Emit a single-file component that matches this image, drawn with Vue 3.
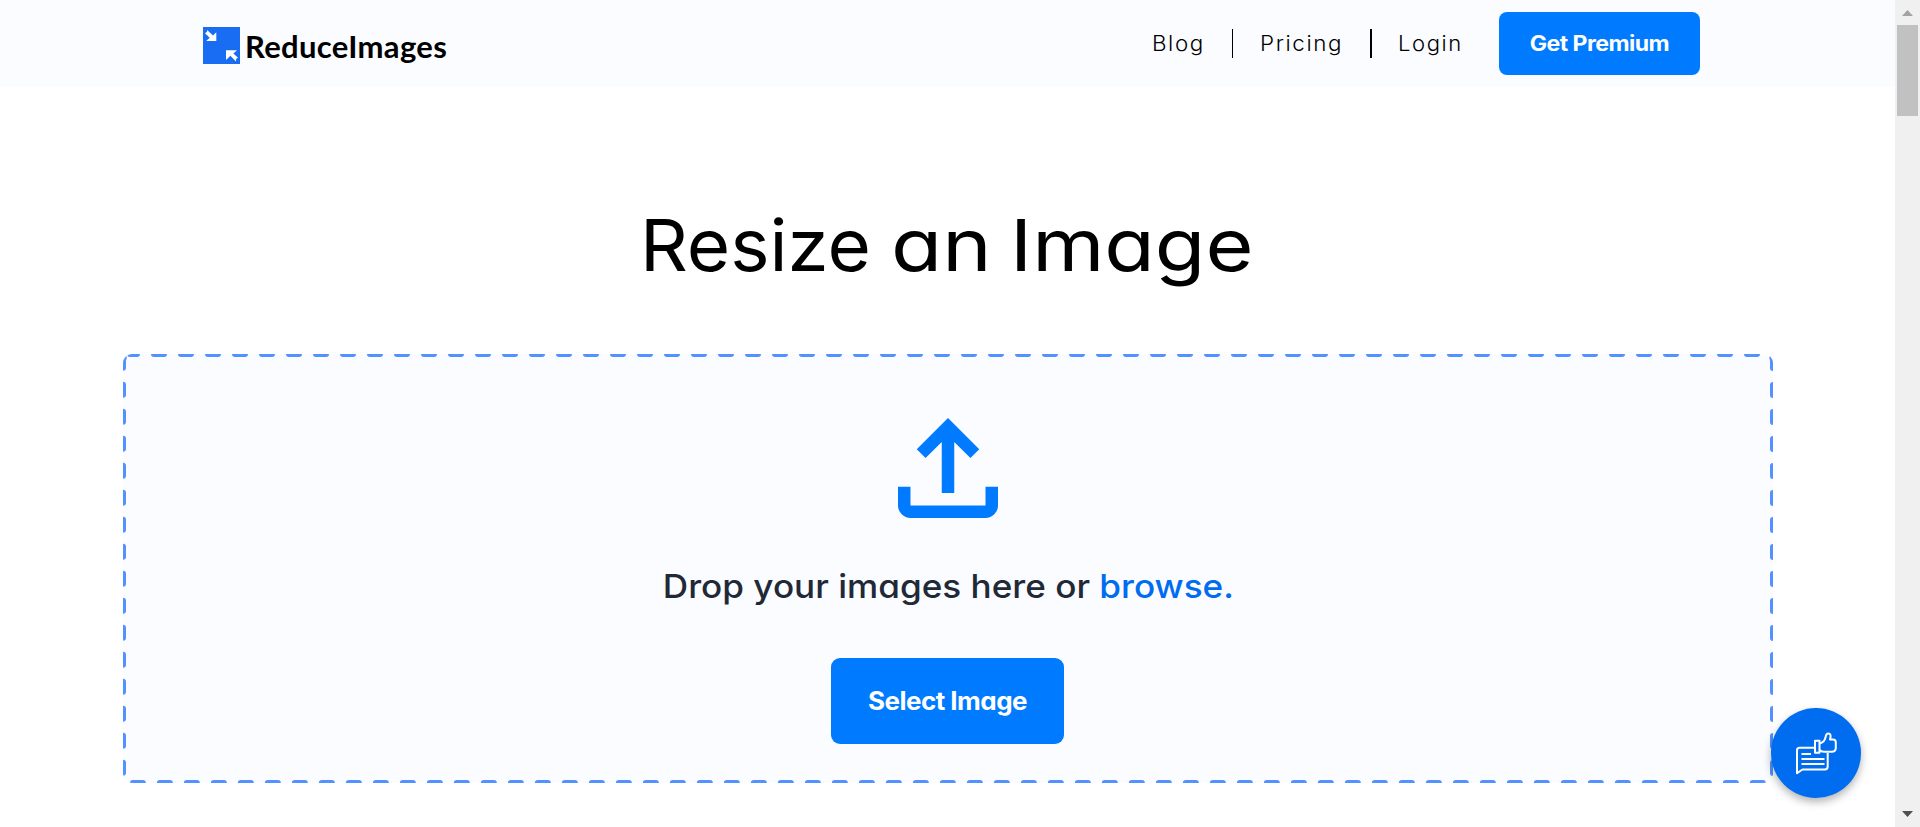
<script setup>
const links = ['Blog', 'Pricing', 'Login']
</script>

<template>
  <div class="window">
    <div class="page">
      <header class="header">
        <a class="logo">
          <svg class="logo-mark" viewBox="0 0 37 37">
            <rect width="37" height="37" fill="#186df2" />
            <path d="M4.200 3l5.800 5.500 3.300-3.200v8.700H3.200l3.500-3.200L2 6.200l2-1.400z" fill="#fff" />
            <path d="M33 34.500l-5.600-5.800-4.400 4.300v-9.800h11l-3.600 3.300 4.600 4.300-1.800 1z" fill="#fff" />
          </svg>
          <span class="logo-text">ReduceImages</span>
        </a>
        <nav class="nav">
          <a v-for="name in links" :key="name" class="link" :class="name.toLowerCase()"><span>{{ name }}</span></a>
          <button class="premium"><span>Get Premium</span></button>
        </nav>
      </header>

      <h1 class="title"><span class="w1">Resize </span><span class="w2">an </span><span class="w3">Image</span></h1>

      <section class="drop">
        <svg class="frame" width="1650" height="429">
          <rect width="1650" height="429" rx="7" ry="7" fill="none" stroke="#5291ff" stroke-width="6"
            stroke-dasharray="10 17" stroke-dashoffset="3" stroke-linecap="round" />
        </svg>
        <svg class="upload" viewBox="0 0 16 16" fill="#007bff">
          <path d="M8 0L3 5l1.410 1.410L7 3.830V12h2V3.830l2.590 2.580L13 5z" />
          <path d="M0 11v3a2 2 0 0 0 2 2h12a2 2 0 0 0 2-2v-3h-2v3H2v-3z" />
        </svg>
        <p class="hint">Drop your images here or <a>browse.</a></p>
        <button class="select"><span>Select Image</span></button>
      </section>
    </div>

    <button class="feedback" aria-label="Feedback">
      <svg width="42" height="43" viewBox="0 0 42 43" fill="none" stroke="#fff" stroke-width="2" stroke-linejoin="round">
        <path d="M19 15.700H4.500a2.500 2.500 0 0 0-2.500 2.500V41.300l5.500-3.800h22.200a3 3 0 0 0 3-3V21" />
        <path d="M6.500 22h9.500M6.500 27h23M6.500 32h23" />
        <path d="M20 8.700h4.500v12H20z" />
        <path d="M24.500 11.500c3-.700 5.200-2.500 6-6 .300-2.500 1-4 2.700-4 2.500 0 3 2.200 1.800 6h3c1.700 0 2.800 1.200 2.800 3v5.300c0 2.600-1.500 4-4 4h-8c-2 0-3.300-.600-4.300-1.800" />
      </svg>
    </button>

    <div class="scrollbar">
      <svg class="up" width="11" height="6" viewBox="0 0 11 6"><path d="M0 6L5.500 0 11 6z" fill="#a3a3a3" /></svg>
      <div class="thumb"></div>
      <svg class="down" width="11" height="6" viewBox="0 0 11 6"><path d="M0 0h11L5.500 6z" fill="#505050" /></svg>
    </div>
  </div>
</template>

<style>
body { margin: 0; overflow: hidden; }
</style>

<style scoped>
.window {
  display: flex;
  position: relative;
  width: 1920px;
  height: 827px;
  overflow: hidden;
  background: #fff;
  font-family: Inter, "Open Sans", sans-serif;
  font-feature-settings: "cv11" 1, "ss03" 1;
  color: #000;
}
.page { width: 1895px; }
.header {
  box-sizing: border-box;
  height: 87px;
  padding: 0 195px 0 203px;
  display: flex;
  justify-content: space-between;
  background: #fbfcff;
}
.logo { display: flex; align-items: center; height: 90px; }
.logo-mark { width: 37px; height: 37px; margin-right: 5px; }
.logo-text {
  font: 700 31px/36px Lato, sans-serif;
  letter-spacing: 0.320px;
  margin-top: 1px;
}
.nav { display: flex; align-items: center; }
.link {
  box-sizing: border-box;
  height: 29px;
  line-height: 29px;
  font-size: 21px;
  font-weight: 300;
  letter-spacing: 1.500px;
  white-space: nowrap;
}
.link span { display: inline-block; transform: scaleX(1.065); transform-origin: left; }
.blog { width: 80px; }
.pricing { width: 138px; padding-left: 27px; border-left: 1px solid #000; }
.login { width: 129px; padding-left: 26px; border-left: 2px solid #000; }
.login span { transform: scaleX(1.05); }
button {
  border: 0;
  padding: 0;
  color: #fff;
  font-family: inherit;
  font-feature-settings: inherit;
  font-weight: 700;
  white-space: nowrap;
}
button span { display: inline-block; }
.premium {
  width: 201px;
  height: 63px;
  border-radius: 8px;
  background: #007bff;
  font-size: 21px;
  letter-spacing: -0.500px;
}
.premium span { transform: scaleX(1.1); }
.title {
  display: flex;
  margin: 108px 0 59px;
  padding-left: 640px;
  height: 100px;
  line-height: 100px;
  font-size: 72px;
  font-weight: 400;
  white-space: nowrap;
}
.title span { display: block; transform-origin: left; }
.title .w1 { width: 251px; transform: scaleX(1.034); }
.title .w2 { width: 119px; transform: scaleX(1.160); }
.title .w3 { width: 246px; transform: scaleX(1.145); }
.drop {
  position: relative;
  box-sizing: border-box;
  width: 1650px;
  height: 429px;
  margin-left: 123px;
  padding-top: 64px;
  display: flex;
  flex-direction: column;
  align-items: center;
  border-radius: 9px;
  overflow: hidden;
  background: #fbfcff;
}
.frame { position: absolute; inset: 0; }
.upload { width: 100px; height: 100px; }
.hint {
  margin: 43px 0 47px;
  height: 50px;
  line-height: 50px;
  font-size: 33px;
  font-weight: 450;
  color: #1f2937;
  white-space: nowrap;
  transform: scaleX(1.064);
}
.hint a { color: #006cf0; }
.select {
  width: 233px;
  height: 86px;
  margin-right: 1px;
  border-radius: 9px;
  background: #007bff;
  font-size: 25px;
  letter-spacing: -0.500px;
}
.select span { transform: scaleX(1.04); }
.feedback {
  position: absolute;
  left: 1771px;
  top: 708px;
  width: 90px;
  height: 90px;
  border-radius: 50%;
  background: #006cf0;
  box-shadow: 0 4px 8px rgba(0, 0, 0, 0.3);
}
.feedback svg { display: block; margin: 0 auto 0 24px; }
.scrollbar {
  box-sizing: border-box;
  width: 25px;
  height: 827px;
  padding: 10px 0;
  display: flex;
  flex-direction: column;
  align-items: center;
  background: #f0f0f0;
}
.up { margin-bottom: 9px; }
.thumb { width: 21px; height: 91px; background: #c1c1c1; }
.down { margin-top: auto; }
</style>
